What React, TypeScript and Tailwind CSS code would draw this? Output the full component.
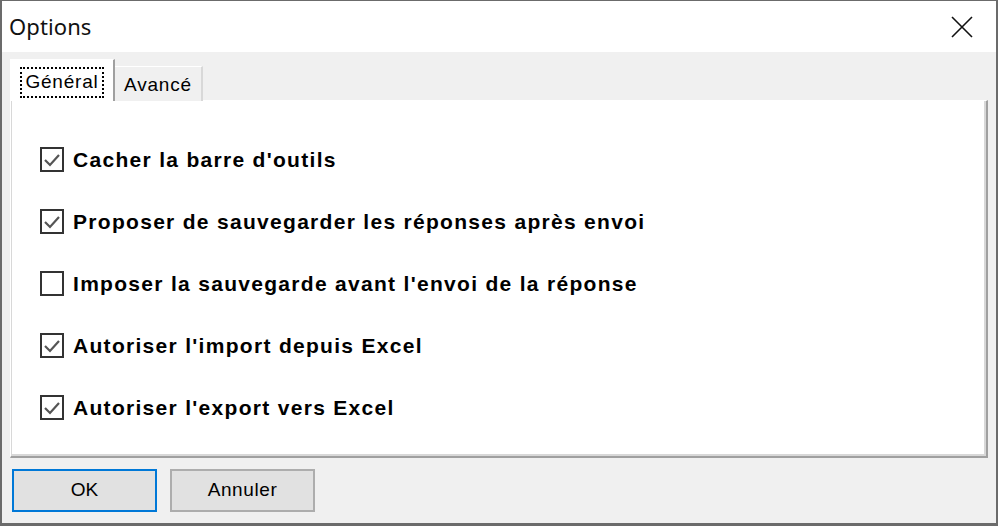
import React from 'react';

const options = [
  { label: "Cacher la barre d'outils", checked: true },
  { label: 'Proposer de sauvegarder les réponses après envoi', checked: true },
  { label: "Imposer la sauvegarde avant l'envoi de la réponse", checked: false },
  { label: "Autoriser l'import depuis Excel", checked: true },
  { label: "Autoriser l'export vers Excel", checked: true },
];

function CheckBox({ checked }: { checked: boolean }) {
  return (
    <div className="w-[24px] h-[25px] border-2 border-[#333333] bg-white flex items-center justify-center shrink-0">
      {checked && (
        <svg width="20" height="20" viewBox="0 0 20 20">
          <polyline points="3,10 8,15 17,5" fill="none" stroke="#555" strokeWidth="2.2" />
        </svg>
      )}
    </div>
  );
}

export default function App() {
  return (
    <div className="w-[998px] h-[526px] bg-[#f0f0f0] border-t border-l-2 border-r-2 border-b-[3px] border-[#6b6b6b] flex flex-col overflow-hidden font-['Liberation_Sans',sans-serif]">
      {/* title bar */}
      <div className="h-[51px] bg-white flex items-center justify-between pl-[7px] pr-[23px] shrink-0">
        <span className="text-[22px] text-[#111] font-['Noto_Sans',sans-serif] tracking-[0.1px]">Options</span>
        <svg width="22" height="22" viewBox="0 0 22 22">
          <path d="M1 1 L21 21 M21 1 L1 21" stroke="#111" strokeWidth="1.6" fill="none" />
        </svg>
      </div>

      <div className="flex flex-col px-[8px] pt-[8px]">
        {/* tabs */}
        <div className="flex items-end h-[41px] relative z-10 -mb-[1px]">
          <div className="h-[42px] w-[105px] bg-white border-t border-l border-white border-r-2 border-r-[#a0a0a0] flex items-center justify-center">
            <div className="border-2 border-dotted border-black px-[3px] h-[31px] mt-[4px] flex items-center text-[19px] text-black tracking-[0.8px]">
              Général
            </div>
          </div>
          <div className="h-[35px] w-[88px] bg-[#f0f0f0] border-t border-white border-r-2 border-r-[#d8d8d8] flex items-center justify-center text-[19px] text-black pt-[2px] tracking-[0.8px]">
            Avancé
          </div>
        </div>

        {/* page */}
        <div className="h-[358px] border-t border-l border-white border-r-2 border-b-2 border-r-[#a0a0a0] border-b-[#a0a0a0]">
          <div className="h-full bg-white border-l border-r-2 border-b-2 border-[#d8d8d8] flex flex-col gap-[37px] pl-[28px] pt-[46px]">
            {options.map((o) => (
              <div key={o.label} className="flex items-center gap-[9px] h-[25px]">
                <CheckBox checked={o.checked} />
                <span className="text-[21px] font-bold text-black tracking-[1.3px]">{o.label}</span>
              </div>
            ))}
          </div>
        </div>

        {/* buttons */}
        <div className="flex gap-[13px] mt-[11px] pl-[2px]">
          <button className="w-[145px] h-[43px] bg-[#e1e1e1] border-2 border-[#0078d7] text-[19px] text-black">
            OK
          </button>
          <button className="w-[145px] h-[43px] bg-[#e1e1e1] border-2 border-[#adadad] text-[19px] text-black tracking-[0.6px]">
            Annuler
          </button>
        </div>
      </div>
    </div>
  );
}
